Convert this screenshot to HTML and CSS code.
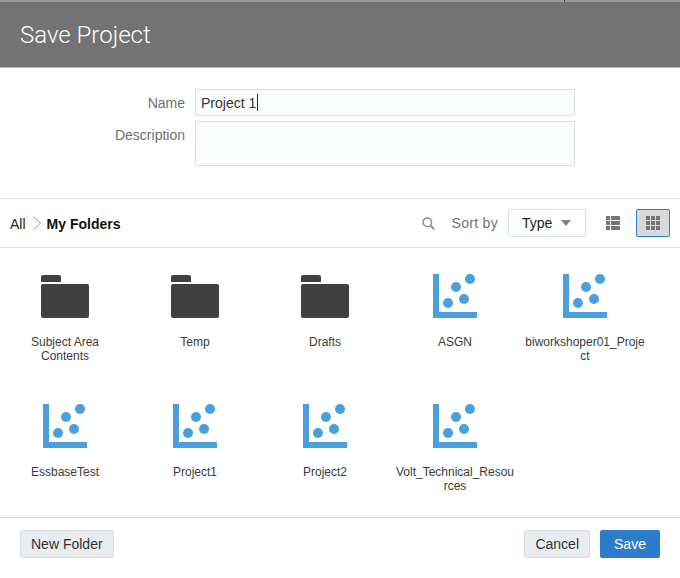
FILE: index.html

```html
<!DOCTYPE html>
<html lang="en">
<head>
  <meta charset="UTF-8" />
  <title>Save Project</title>
  <link rel="stylesheet" href="styles.css">
</head>
<body>
  <svg class="defs" width="0" height="0">
    <symbol id="folder" viewBox="0 0 48 44">
      <path d="M0 8V3a2 2 0 0 1 2-2h16a2 2 0 0 1 2 2v5z" fill="#404040"/>
      <rect x="0" y="10" width="48" height="34" rx="2" fill="#404040"/>
    </symbol>
    <symbol id="project" viewBox="0 0 44 44">
      <path d="M0 0h6v38h38v6H0z" fill="#4a9fdd"/>
      <circle cx="15" cy="29" r="5" fill="#4a9fdd"/>
      <circle cx="23" cy="13" r="5" fill="#4a9fdd"/>
      <circle cx="31" cy="25" r="5" fill="#4a9fdd"/>
      <circle cx="37" cy="5" r="5" fill="#4a9fdd"/>
    </symbol>
  </svg>

  <div class="strip"><span class="tick"></span></div>
  <header class="title-bar">Save Project</header>

  <section class="form">
    <div class="field">
      <label>Name</label>
      <div class="input name-input">Project 1<span class="caret"></span></div>
    </div>
    <div class="field">
      <label>Description</label>
      <div class="input desc-input"></div>
    </div>
  </section>

  <nav class="toolbar">
    <span class="crumb">All</span>
    <svg class="chevron" width="10" height="16" viewBox="0 0 10 16"><path d="M1.500 1.500L8.500 8l-7 6.500" fill="none" stroke="#999" stroke-width="1"/></svg>
    <span class="crumb current">My Folders</span>
    <svg class="search" width="13" height="13" viewBox="0 0 13 13"><circle cx="5.300" cy="5.300" r="4.300" fill="none" stroke="#8c8c8c" stroke-width="1.400"/><path d="M8.500 8.500l3.800 3.800" stroke="#8c8c8c" stroke-width="1.800"/></svg>
    <span class="sort-label">Sort by</span>
    <div class="select">Type<span class="arrow"></span></div>
    <button class="view-btn">
      <svg width="14" height="14" viewBox="0 0 14 14" fill="#757575"><rect width="4" height="4"/><rect x="5" width="9" height="4"/><rect y="5" width="4" height="4"/><rect x="5" y="5" width="9" height="4"/><rect y="10" width="4" height="4"/><rect x="5" y="10" width="9" height="4"/></svg>
    </button>
    <button class="view-btn active">
      <svg width="14" height="14" viewBox="0 0 14 14" fill="#757575"><rect width="4" height="4"/><rect x="5" width="4" height="4"/><rect x="10" width="4" height="4"/><rect y="5" width="4" height="4"/><rect x="5" y="5" width="4" height="4"/><rect x="10" y="5" width="4" height="4"/><rect y="10" width="4" height="4"/><rect x="5" y="10" width="4" height="4"/><rect x="10" y="10" width="4" height="4"/></svg>
    </button>
  </nav>

  <main class="grid">
    <div class="item"><svg class="icon"><use href="#folder"/></svg><span class="item-name">Subject Area<br>Contents</span></div>
    <div class="item"><svg class="icon"><use href="#folder"/></svg><span class="item-name">Temp</span></div>
    <div class="item"><svg class="icon"><use href="#folder"/></svg><span class="item-name">Drafts</span></div>
    <div class="item"><svg class="icon"><use href="#project"/></svg><span class="item-name">ASGN</span></div>
    <div class="item"><svg class="icon"><use href="#project"/></svg><span class="item-name">biworkshoper01_Project</span></div>
    <div class="item"><svg class="icon"><use href="#project"/></svg><span class="item-name">EssbaseTest</span></div>
    <div class="item"><svg class="icon"><use href="#project"/></svg><span class="item-name">Project1</span></div>
    <div class="item"><svg class="icon"><use href="#project"/></svg><span class="item-name">Project2</span></div>
    <div class="item"><svg class="icon"><use href="#project"/></svg><span class="item-name">Volt_Technical_Resources</span></div>
  </main>

  <footer class="actions">
    <button class="btn">New Folder</button>
    <button class="btn push">Cancel</button>
    <button class="btn primary">Save</button>
  </footer>
</body>
</html>
```

FILE: styles.css

```css
:root {
  --line: #d6dfe6;
  --text: #333;
  --muted: #707070;
}
html, body {
  height: 100%;
}
body {
  margin: 0;
  background: #fff;
  color: var(--text);
  font-family: "Liberation Sans", Arial, sans-serif;
  font-size: 12px;
  overflow: hidden;
}
.defs {
  position: absolute;
}
.strip {
  height: 2px;
  background: #999;
}
.tick {
  display: block;
  width: 1px;
  height: 2px;
  margin-left: 564px;
  background: #1f4e8c;
}
.title-bar {
  box-sizing: border-box;
  height: 66px;
  padding-left: 20px;
  background: #737373;
  border-bottom: 1px solid #bdbdbd;
  color: #fff;
  font-family: Roboto, "Liberation Sans", sans-serif;
  font-size: 24px;
  font-weight: 300;
  line-height: 66px;
}
.form {
  box-sizing: border-box;
  height: 131px;
  padding-top: 21px;
  border-bottom: 1px solid var(--line);
}
.field {
  display: flex;
  margin-bottom: 5px;
}
.field label {
  width: 185px;
  height: 27px;
  margin-right: 10px;
  text-align: right;
  font-size: 14px;
  line-height: 29px;
  color: var(--muted);
}
.input {
  box-sizing: border-box;
  width: 380px;
  background: #fcfdfe;
  border: 1px solid var(--line);
  border-radius: 2px;
  padding-left: 5px;
  font-size: 14px;
  line-height: 27px;
}
.name-input {
  height: 27px;
}
.desc-input {
  height: 45px;
}
.caret {
  display: inline-block;
  width: 1px;
  height: 17px;
  margin-left: 1px;
  background: #222;
  vertical-align: -3px;
}
.toolbar {
  box-sizing: border-box;
  display: flex;
  align-items: center;
  height: 49px;
  padding: 0 10px;
  border-bottom: 1px solid var(--line);
}
.crumb {
  padding-top: 2px;
  font-size: 14px;
  color: #222;
}
.chevron {
  margin: 0 5px 0 6px;
}
.current {
  font-weight: bold;
  color: #111;
}
.search {
  margin-left: auto;
  margin-right: 17px;
}
.sort-label {
  font-size: 14px;
  letter-spacing: 0.3px;
  color: var(--muted);
  margin-right: 10px;
}
.select {
  box-sizing: border-box;
  display: flex;
  align-items: center;
  width: 78px;
  height: 28px;
  padding-left: 13px;
  border: 1px solid var(--line);
  border-radius: 2px;
  font-size: 14px;
  color: #222;
}
.arrow {
  width: 0;
  height: 0;
  margin-left: 9px;
  border-left: 5px solid transparent;
  border-right: 5px solid transparent;
  border-top: 6px solid #808080;
}
.view-btn {
  display: flex;
  align-items: center;
  justify-content: center;
  box-sizing: border-box;
  width: 34px;
  height: 28px;
  margin-left: 10px;
  padding: 0;
  background: none;
  border: 1px solid transparent;
  border-radius: 2px;
}
.view-btn.active {
  margin-left: 6px;
  background: #d9d9d9;
  border-color: #2e7cc9;
}
.grid {
  box-sizing: border-box;
  display: grid;
  grid-template-columns: repeat(5, 130px);
  grid-auto-rows: 130px;
  height: 270px;
  padding-top: 26px;
  border-bottom: 1px solid var(--line);
}
.item {
  display: flex;
  flex-direction: column;
  align-items: center;
}
.icon {
  width: 48px;
  height: 44px;
  margin-bottom: 17px;
}
.item-name {
  width: 120px;
  text-align: center;
  line-height: 14px;
  overflow-wrap: anywhere;
  color: #3a3a3a;
}
.actions {
  display: flex;
  gap: 10px;
  padding: 12px 20px;
}
.btn {
  box-sizing: border-box;
  height: 28px;
  padding: 0 10px;
  background: #e8ecef;
  border: 1px solid var(--line);
  border-radius: 2px;
  font-family: inherit;
  font-size: 14px;
  color: #333;
}
.push {
  margin-left: auto;
}
.primary {
  width: 60px;
  background: #2d7bcb;
  border-color: #2d7bcb;
  color: #fff;
}
```
